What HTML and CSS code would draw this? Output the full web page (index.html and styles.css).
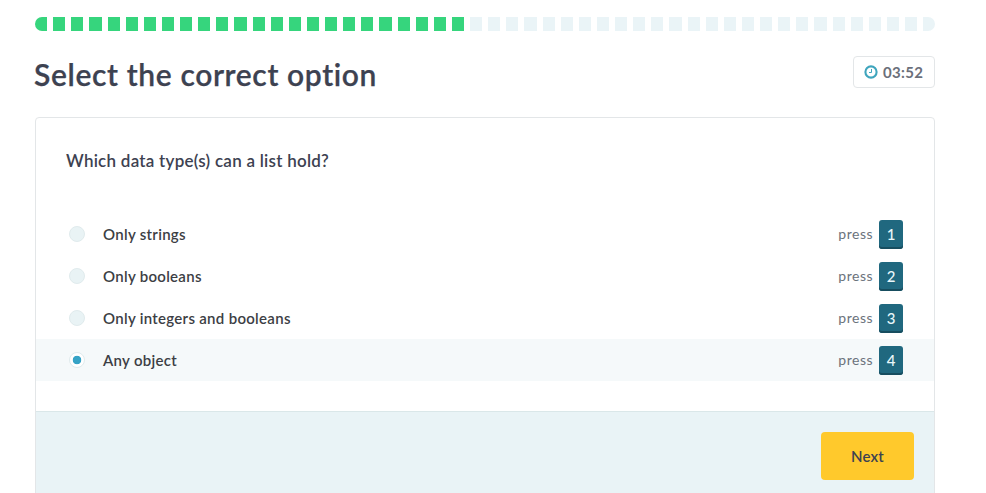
FILE: index.html
```
<!DOCTYPE html>
<html lang="en">
<head>
<meta charset="utf-8">
<title>Quiz</title>
<link rel="stylesheet" href="styles.css">
</head>
<body>
<main class="quiz">
  <div class="progress">
    <i class="done"></i><i class="done"></i><i class="done"></i><i class="done"></i><i class="done"></i><i class="done"></i><i class="done"></i><i class="done"></i>
    <i class="done"></i><i class="done"></i><i class="done"></i><i class="done"></i><i class="done"></i><i class="done"></i><i class="done"></i><i class="done"></i>
    <i class="done"></i><i class="done"></i><i class="done"></i><i class="done"></i><i class="done"></i><i class="done"></i><i class="done"></i><i class="done"></i>
    <i></i><i></i><i></i><i></i><i></i><i></i><i></i><i></i><i></i><i></i><i></i><i></i><i></i>
    <i></i><i></i><i></i><i></i><i></i><i></i><i></i><i></i><i></i><i></i><i></i><i></i><i></i>
  </div>
  <header class="head">
    <h1>Select the correct option</h1>
    <div class="timer">
      <svg width="14" height="14" viewBox="0 0 14 14" fill="none"><circle cx="7" cy="7" r="5.6" stroke="#3fa5bd" stroke-width="2.1"/><path d="M7.5 4v3.5H5" stroke="#3fa5bd"/></svg>
      <span>03:52</span>
    </div>
  </header>
  <section class="card">
    <h2>Which data type(s) can a list hold?</h2>
    <ul class="options">
      <li><span class="radio"></span><span class="label">Only strings</span><span class="press">press</span><kbd>1</kbd></li>
      <li><span class="radio"></span><span class="label">Only booleans</span><span class="press">press</span><kbd>2</kbd></li>
      <li><span class="radio"></span><span class="label">Only integers and booleans</span><span class="press">press</span><kbd>3</kbd></li>
      <li class="selected"><span class="radio"></span><span class="label">Any object</span><span class="press">press</span><kbd>4</kbd></li>
    </ul>
    <footer class="foot"><button>Next</button></footer>
  </section>
</main>
</body>
</html>
```
FILE: styles.css
```
* { box-sizing: border-box; }
body {
  margin: 0;
  height: 493px;
  overflow: hidden;
  background: #fff;
  color: #3d4251;
  font-family: Lato, sans-serif;
}
.quiz { width: 900px; margin: 0 0 0 35px; padding-top: 17px; }
.progress { display: flex; gap: 6px; height: 14px; }
.progress i { flex: 1; background: #eaf4f7; }
.progress .done { background: #36d57d; }
.progress i:first-child { border-radius: 7px 0 0 7px; }
.progress i:last-child { border-radius: 0 7px 7px 0; }
.head {
  display: flex;
  justify-content: space-between;
  align-items: flex-start;
  height: 86px;
  padding-top: 25px;
}
h1 { margin: -1px 0 0 -1px; font-size: 30px; line-height: 38px; font-weight: 600; letter-spacing: 0.63px; -webkit-text-stroke: 0.25px; }
.timer {
  display: flex;
  align-items: center;
  gap: 5px;
  width: 82px;
  height: 32px;
  padding-left: 10px;
  border: 1px solid #e3e6e8;
  border-radius: 4px;
  color: #6b6f7a;
  font-size: 15px;
  font-weight: 700;
  letter-spacing: 0.35px;
}
.card { height: 400px; border: 1px solid #e3e6e8; border-radius: 4px; }
h2 { margin: 30px 30px 0; font-size: 17px; line-height: 26px; font-weight: 600; letter-spacing: 0.25px; }
.options { list-style: none; margin: 39px 0 30px; padding: 0; }
.options li { display: flex; align-items: center; height: 42px; padding: 0 31px 0 33px; }
.options .selected { background: #f5f9fa; }
.radio {
  width: 16px;
  height: 16px;
  margin-right: 18px;
  border: 1px solid #e0ebed;
  border-radius: 50%;
  background: #e9f3f5;
}
.selected .radio { background: radial-gradient(circle, #36a3c6 4px, #fff 4.6px); }
.label { flex: 1; font-size: 15px; font-weight: 600; color: #3c3e44; letter-spacing: 0.3px; }
.press { margin: 0 6px 2px 0; font-size: 14px; color: #6b737c; letter-spacing: 0.5px; }
kbd {
  width: 24px;
  height: 29px;
  border-radius: 3px;
  background: #20687f;
  box-shadow: inset 0 -2px #174d5f;
  color: #e9f7fa;
  font: 500 15px/28px Lato, sans-serif;
  text-align: center;
}
.foot {
  display: flex;
  justify-content: flex-end;
  height: 105px;
  padding: 20px 20px 0;
  border-top: 1px solid #dae7e9;
  background: #e9f3f6;
}
button {
  width: 93px;
  height: 48px;
  padding: 0;
  border: 0;
  border-radius: 4px;
  background: #ffc92c;
  color: #3d4251;
  font: 600 15px/48px Lato, sans-serif;
  letter-spacing: 0.2px;
}
```
